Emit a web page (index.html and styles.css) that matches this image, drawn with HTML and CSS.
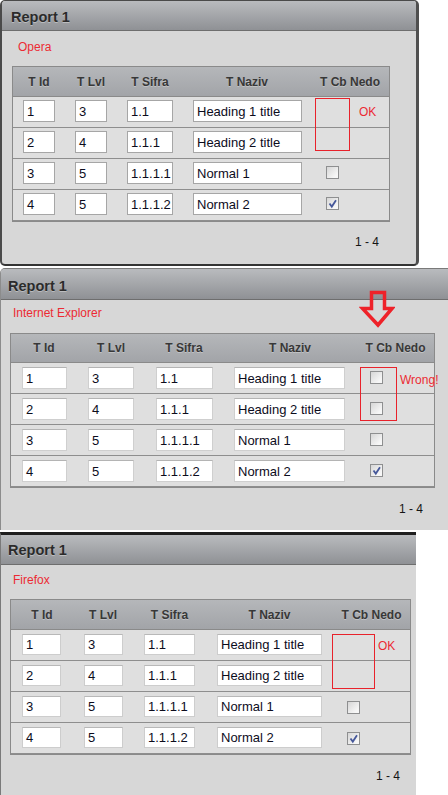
FILE: index.html
```html
<!DOCTYPE html>
<html lang="en">
<head>
  <meta charset="UTF-8" />
  <meta name="viewport" content="width=device-width, initial-scale=1.0"/>
  <title>Report 1</title>
  <link rel="stylesheet" href="styles.css">
</head>
<body>

  <!-- Opera -->
  <div class="win win-opera">
    <div class="win-title">Report 1</div>
    <div class="win-body">
      <div class="report">
        <div class="browser">Opera</div>
        <div class="grid">
          <div class="grid-head">
            <div class="c c-id">T Id</div>
            <div class="c c-lvl">T Lvl</div>
            <div class="c c-sifra">T Sifra</div>
            <div class="c c-naziv">T Naziv</div>
            <div class="c c-cb">T Cb Nedo</div>
          </div>
          <div class="grid-row">
            <div class="c c-id"><span class="field f-id">1</span></div>
            <div class="c c-lvl"><span class="field f-lvl">3</span></div>
            <div class="c c-sifra"><span class="field f-sifra">1.1</span></div>
            <div class="c c-naziv"><span class="field f-naziv">Heading 1 title</span></div>
            <div class="c c-cb"></div>
          </div>
          <div class="grid-row">
            <div class="c c-id"><span class="field f-id">2</span></div>
            <div class="c c-lvl"><span class="field f-lvl">4</span></div>
            <div class="c c-sifra"><span class="field f-sifra">1.1.1</span></div>
            <div class="c c-naziv"><span class="field f-naziv">Heading 2 title</span></div>
            <div class="c c-cb"></div>
          </div>
          <div class="grid-row">
            <div class="c c-id"><span class="field f-id">3</span></div>
            <div class="c c-lvl"><span class="field f-lvl">5</span></div>
            <div class="c c-sifra"><span class="field f-sifra">1.1.1.1</span></div>
            <div class="c c-naziv"><span class="field f-naziv">Normal 1</span></div>
            <div class="c c-cb"><span class="check"></span></div>
          </div>
          <div class="grid-row">
            <div class="c c-id"><span class="field f-id">4</span></div>
            <div class="c c-lvl"><span class="field f-lvl">5</span></div>
            <div class="c c-sifra"><span class="field f-sifra">1.1.1.2</span></div>
            <div class="c c-naziv"><span class="field f-naziv">Normal 2</span></div>
            <div class="c c-cb"><span class="check checked"><svg viewBox="0 0 11 11" width="11" height="11"><path d="M2.5 5.5 L4.8 8.6 L9 2.2" fill="none" stroke="#46589a" stroke-width="1.8"/></svg></span></div>
          </div>
          <div class="mark"></div>
          <span class="note">OK</span>
        </div>
        <div class="pager">1 - 4</div>
      </div>
    </div>
  </div>

  <!-- Internet Explorer -->
  <div class="win win-ie">
    <div class="win-title">Report 1</div>
    <svg class="arrow" viewBox="0 0 36 40" width="36" height="40">
      <path d="M12.5 3.5 H25.5 V19.5 H33 L19 36 L3.5 19.5 H12.5 Z" fill="none" stroke="#ee2229" stroke-width="3.5"/>
    </svg>
    <div class="win-body">
      <div class="report">
        <div class="browser">Internet Explorer</div>
        <div class="grid">
          <div class="grid-head">
            <div class="c c-id">T Id</div>
            <div class="c c-lvl">T Lvl</div>
            <div class="c c-sifra">T Sifra</div>
            <div class="c c-naziv">T Naziv</div>
            <div class="c c-cb">T Cb Nedo</div>
          </div>
          <div class="grid-row">
            <div class="c c-id"><span class="field f-id">1</span></div>
            <div class="c c-lvl"><span class="field f-lvl">3</span></div>
            <div class="c c-sifra"><span class="field f-sifra">1.1</span></div>
            <div class="c c-naziv"><span class="field f-naziv">Heading 1 title</span></div>
            <div class="c c-cb"><span class="check"></span></div>
          </div>
          <div class="grid-row">
            <div class="c c-id"><span class="field f-id">2</span></div>
            <div class="c c-lvl"><span class="field f-lvl">4</span></div>
            <div class="c c-sifra"><span class="field f-sifra">1.1.1</span></div>
            <div class="c c-naziv"><span class="field f-naziv">Heading 2 title</span></div>
            <div class="c c-cb"><span class="check"></span></div>
          </div>
          <div class="grid-row">
            <div class="c c-id"><span class="field f-id">3</span></div>
            <div class="c c-lvl"><span class="field f-lvl">5</span></div>
            <div class="c c-sifra"><span class="field f-sifra">1.1.1.1</span></div>
            <div class="c c-naziv"><span class="field f-naziv">Normal 1</span></div>
            <div class="c c-cb"><span class="check"></span></div>
          </div>
          <div class="grid-row">
            <div class="c c-id"><span class="field f-id">4</span></div>
            <div class="c c-lvl"><span class="field f-lvl">5</span></div>
            <div class="c c-sifra"><span class="field f-sifra">1.1.1.2</span></div>
            <div class="c c-naziv"><span class="field f-naziv">Normal 2</span></div>
            <div class="c c-cb"><span class="check checked"><svg viewBox="0 0 11 11" width="11" height="11"><path d="M2.5 5.5 L4.8 8.6 L9 2.2" fill="none" stroke="#46589a" stroke-width="1.8"/></svg></span></div>
          </div>
          <div class="mark"></div>
          <span class="note">Wrong!</span>
        </div>
        <div class="pager">1 - 4</div>
      </div>
    </div>
  </div>

  <!-- Firefox -->
  <div class="win win-ff">
    <div class="win-title">Report 1</div>
    <div class="win-body">
      <div class="report">
        <div class="browser">Firefox</div>
        <div class="grid">
          <div class="grid-head">
            <div class="c c-id">T Id</div>
            <div class="c c-lvl">T Lvl</div>
            <div class="c c-sifra">T Sifra</div>
            <div class="c c-naziv">T Naziv</div>
            <div class="c c-cb">T Cb Nedo</div>
          </div>
          <div class="grid-row">
            <div class="c c-id"><span class="field f-id">1</span></div>
            <div class="c c-lvl"><span class="field f-lvl">3</span></div>
            <div class="c c-sifra"><span class="field f-sifra">1.1</span></div>
            <div class="c c-naziv"><span class="field f-naziv">Heading 1 title</span></div>
            <div class="c c-cb"></div>
          </div>
          <div class="grid-row">
            <div class="c c-id"><span class="field f-id">2</span></div>
            <div class="c c-lvl"><span class="field f-lvl">4</span></div>
            <div class="c c-sifra"><span class="field f-sifra">1.1.1</span></div>
            <div class="c c-naziv"><span class="field f-naziv">Heading 2 title</span></div>
            <div class="c c-cb"></div>
          </div>
          <div class="grid-row">
            <div class="c c-id"><span class="field f-id">3</span></div>
            <div class="c c-lvl"><span class="field f-lvl">5</span></div>
            <div class="c c-sifra"><span class="field f-sifra">1.1.1.1</span></div>
            <div class="c c-naziv"><span class="field f-naziv">Normal 1</span></div>
            <div class="c c-cb"><span class="check"></span></div>
          </div>
          <div class="grid-row">
            <div class="c c-id"><span class="field f-id">4</span></div>
            <div class="c c-lvl"><span class="field f-lvl">5</span></div>
            <div class="c c-sifra"><span class="field f-sifra">1.1.1.2</span></div>
            <div class="c c-naziv"><span class="field f-naziv">Normal 2</span></div>
            <div class="c c-cb"><span class="check checked"><svg viewBox="0 0 11 11" width="11" height="11"><path d="M2.5 5.5 L4.8 8.6 L9 2.2" fill="none" stroke="#46589a" stroke-width="1.8"/></svg></span></div>
          </div>
          <div class="mark"></div>
          <span class="note">OK</span>
        </div>
        <div class="pager">1 - 4</div>
      </div>
    </div>
  </div>

</body>
</html>
```

FILE: styles.css
```css
* {
  box-sizing: border-box;
}

body {
  margin: 0;
  font-family: "Liberation Sans", Arial, sans-serif;
  background: #fff;
  color: #111;
}

/* window frame */
.win {
  position: relative;
  background: #d7d7d7;
  overflow: hidden;
}

.win-title {
  display: flex;
  align-items: center;
  font-size: 14.5px;
  font-weight: bold;
  color: #2b2b2b;
  text-shadow: 0 1px 0 rgba(255,255,255,0.35);
  background: linear-gradient(#b9bbbe, #8f9195);
  border-bottom: 1px solid #6e6e6e;
}

.report {
  width: max-content;
}

.browser {
  font-size: 12px;
  line-height: 14px;
  color: #ec2a33;
  padding-left: 6px;
}

/* grid */
.grid {
  position: relative;
  border: 1px solid #8a8a8a;
  background: #dfdfdf;
}

.grid-head {
  display: flex;
  height: var(--head-h);
  border-bottom: 1px solid #8a8a8a;
  background: linear-gradient(#b5b7ba, #a2a4a8);
}

.grid-head .c {
  display: flex;
  align-items: center;
  justify-content: center;
  font-size: 12px;
  font-weight: bold;
  color: #383838;
  text-shadow: 0 1px 0 rgba(255,255,255,0.3);
}

.grid-row {
  display: flex;
  height: 31px;
  border-bottom: 1px solid #8e8e8e;
}

.grid-row:last-of-type {
  height: 30px;
  border-bottom: none;
}

.grid-row .c {
  padding-left: var(--pad);
  padding-top: var(--top);
}

.grid-row .c-cb {
  padding-left: var(--cb-pad);
  padding-top: var(--cb-top);
}

.c { flex: none; }
.c-id { width: var(--c-id); }
.c-lvl { width: var(--c-lvl); }
.c-sifra { width: var(--c-sifra); }
.c-naziv { width: var(--c-naziv); }
.c-cb { width: var(--c-cb); }

.field {
  display: flex;
  align-items: center;
  height: var(--fh);
  padding-left: 3px;
  font-size: 13px;
  color: #0c0c1c;
  background: #fff;
  border: 1px solid var(--fb);
  white-space: nowrap;
}

.f-id { width: var(--w-id); }
.f-lvl { width: var(--w-lvl); }
.f-sifra { width: var(--w-sifra); }
.f-naziv { width: var(--w-naziv); }

.check {
  display: flex;
  align-items: center;
  justify-content: center;
  width: 13px;
  height: 13px;
  border: 1px solid #8e8f90;
  background: linear-gradient(135deg, #d6d6d6, #f7f7f7 80%);
}

/* annotations */
.mark {
  position: absolute;
  border: 1px solid #e8222b;
}

.note {
  position: absolute;
  font-size: 12px;
  line-height: 14px;
  color: #ec2a33;
}

.arrow {
  position: absolute;
  left: 358px;
  top: 20px;
}

.pager {
  text-align: right;
  font-size: 12px;
  line-height: 14px;
  color: #151515;
}

/* Opera */
.win-opera {
  width: 419px;
  border-top: 1px solid #4a4a4a;
  border-left: 2px solid #4a4a4a;
  border-right: 3px solid #4f4f4f;
  border-bottom: 2px solid #343434;
  border-radius: 5px;
  --head-h: 30px;
  --c-id: 52px; --c-lvl: 52px; --c-sifra: 66px; --c-naziv: 128px; --c-cb: 78px;
  --w-id: 32px; --w-lvl: 32px; --w-sifra: 46px; --w-naziv: 109px;
  --pad: 10px; --top: 3px; --cb-pad: 15px; --cb-top: 7px;
  --fh: 22px; --fb: #a6a6a6;
}

.win-opera .win-title {
  height: 30px;
  padding: 3px 0 0 9px;
}

.win-opera .win-body {
  padding: 9px 0 15px 10px;
}

.win-opera .browser { margin-bottom: 12px; }
.win-opera .pager { margin-top: 13px; padding-right: 11px; }
.win-opera .mark { left: 302px; top: 31px; width: 35px; height: 53px; }
.win-opera .note { left: 346px; top: 38px; }

/* Internet Explorer */
.win-ie {
  margin-top: 2px;
  width: 448px;
  border-top: 1px solid #7a7a7a;
  border-left: 1px solid #8c8c8c;
  border-radius: 5px 0 0 0;
  --head-h: 29px;
  --c-id: 66px; --c-lvl: 68px; --c-sifra: 78px; --c-naziv: 134px; --c-cb: 77px;
  --w-id: 45px; --w-lvl: 46px; --w-sifra: 57px; --w-naziv: 111px;
  --pad: 11px; --top: 4px; --cb-pad: 13px; --cb-top: 8px;
  --fh: 22px; --fb: #cfcfcf;
}

.win-ie .win-title {
  height: 31px;
  padding: 3px 0 0 7px;
}

.win-ie .win-body {
  padding: 6px 0 14px 9px;
}

.win-ie .field { border-top-color: #b4b4b4; }
.win-ie .browser { margin-bottom: 13px; padding-left: 3px; }
.win-ie .pager { margin-top: 14px; padding-right: 12px; }
.win-ie .mark { left: 349px; top: 33px; width: 37px; height: 54px; }
.win-ie .note { left: 389px; top: 39px; }

/* Firefox */
.win-ff {
  margin-top: 2px;
  width: 416px;
  border-top: 3px solid #1e1e1e;
  border-left: 1px solid #7a7a7a;
  --head-h: 30px;
  --c-id: 62px; --c-lvl: 60px; --c-sifra: 73px; --c-naziv: 127px; --c-cb: 77px;
  --w-id: 39px; --w-lvl: 39px; --w-sifra: 51px; --w-naziv: 105px;
  --pad: 11px; --top: 4px; --cb-pad: 14px; --cb-top: 9px;
  --fh: 21px; --fb: #cdcdcd;
}

.win-ff .win-title {
  height: 30px;
  padding: 1px 0 0 7px;
}

.win-ff .win-body {
  padding: 8px 0 20px 9px;
}

.win-ff .field { border-top-color: #b8b8b8; }
.win-ff .browser { margin-bottom: 12px; padding-left: 3px; }
.win-ff .pager { margin-top: 14px; padding-right: 11px; }
.win-ff .mark { left: 321px; top: 34px; width: 43px; height: 55px; }
.win-ff .note { left: 367px; top: 39px; }
```
